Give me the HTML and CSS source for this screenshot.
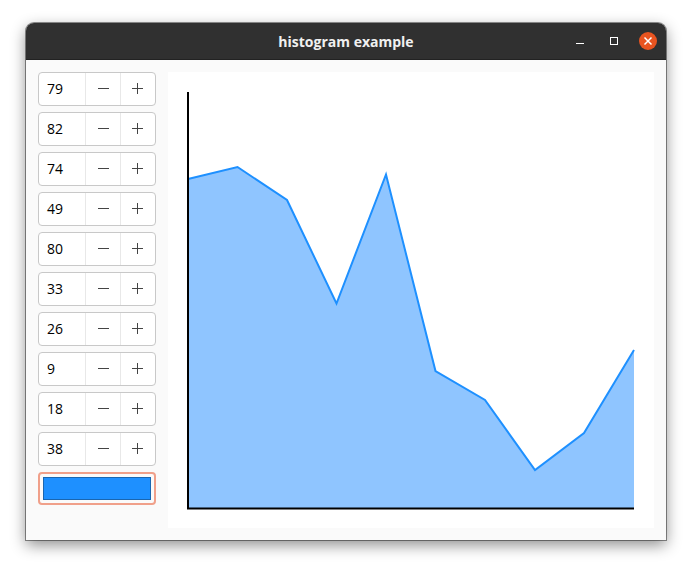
FILE: index.html
```html
<!DOCTYPE html>
<html lang="en">
<head>
<meta charset="utf-8">
<title>histogram example</title>
<link rel="stylesheet" href="styles.css">
</head>
<body>
<div class="window">
  <header class="titlebar">
    <span class="title">histogram example</span>
    <div class="controls">
      <svg class="ctl" width="10" height="10" viewBox="0 0 10 10"><rect x="1" y="7" width="8" height="1" fill="#fff"/></svg>
      <svg class="ctl ctl-max" width="10" height="10" viewBox="0 0 10 10"><rect x="1.5" y="1.5" width="7" height="7" fill="none" stroke="#fff"/></svg>
      <svg class="ctl-close" width="18" height="18" viewBox="0 0 18 18"><circle cx="9" cy="9" r="9" fill="#e95420"/><path d="M5.5 5.5l7 7M12.5 5.5l-7 7" stroke="#fff" stroke-width="1.5"/></svg>
    </div>
  </header>
  <main class="content">
    <div class="side">
      <div class="spin"><span class="val">79</span><span class="btn btn-minus"><svg width="11" height="11" viewBox="0 0 11 11"><path d="M0 5.5h11" stroke="#444"/></svg></span><span class="btn btn-plus"><svg width="11" height="11" viewBox="0 0 11 11"><path d="M0 5.5h11M5.5 0v11" stroke="#444"/></svg></span></div>
      <div class="spin"><span class="val">82</span><span class="btn btn-minus"><svg width="11" height="11" viewBox="0 0 11 11"><path d="M0 5.5h11" stroke="#444"/></svg></span><span class="btn btn-plus"><svg width="11" height="11" viewBox="0 0 11 11"><path d="M0 5.5h11M5.5 0v11" stroke="#444"/></svg></span></div>
      <div class="spin"><span class="val">74</span><span class="btn btn-minus"><svg width="11" height="11" viewBox="0 0 11 11"><path d="M0 5.5h11" stroke="#444"/></svg></span><span class="btn btn-plus"><svg width="11" height="11" viewBox="0 0 11 11"><path d="M0 5.5h11M5.5 0v11" stroke="#444"/></svg></span></div>
      <div class="spin"><span class="val">49</span><span class="btn btn-minus"><svg width="11" height="11" viewBox="0 0 11 11"><path d="M0 5.5h11" stroke="#444"/></svg></span><span class="btn btn-plus"><svg width="11" height="11" viewBox="0 0 11 11"><path d="M0 5.5h11M5.5 0v11" stroke="#444"/></svg></span></div>
      <div class="spin"><span class="val">80</span><span class="btn btn-minus"><svg width="11" height="11" viewBox="0 0 11 11"><path d="M0 5.5h11" stroke="#444"/></svg></span><span class="btn btn-plus"><svg width="11" height="11" viewBox="0 0 11 11"><path d="M0 5.5h11M5.5 0v11" stroke="#444"/></svg></span></div>
      <div class="spin"><span class="val">33</span><span class="btn btn-minus"><svg width="11" height="11" viewBox="0 0 11 11"><path d="M0 5.5h11" stroke="#444"/></svg></span><span class="btn btn-plus"><svg width="11" height="11" viewBox="0 0 11 11"><path d="M0 5.5h11M5.5 0v11" stroke="#444"/></svg></span></div>
      <div class="spin"><span class="val">26</span><span class="btn btn-minus"><svg width="11" height="11" viewBox="0 0 11 11"><path d="M0 5.5h11" stroke="#444"/></svg></span><span class="btn btn-plus"><svg width="11" height="11" viewBox="0 0 11 11"><path d="M0 5.5h11M5.5 0v11" stroke="#444"/></svg></span></div>
      <div class="spin"><span class="val">9</span><span class="btn btn-minus"><svg width="11" height="11" viewBox="0 0 11 11"><path d="M0 5.5h11" stroke="#444"/></svg></span><span class="btn btn-plus"><svg width="11" height="11" viewBox="0 0 11 11"><path d="M0 5.5h11M5.5 0v11" stroke="#444"/></svg></span></div>
      <div class="spin"><span class="val">18</span><span class="btn btn-minus"><svg width="11" height="11" viewBox="0 0 11 11"><path d="M0 5.5h11" stroke="#444"/></svg></span><span class="btn btn-plus"><svg width="11" height="11" viewBox="0 0 11 11"><path d="M0 5.5h11M5.5 0v11" stroke="#444"/></svg></span></div>
      <div class="spin"><span class="val">38</span><span class="btn btn-minus"><svg width="11" height="11" viewBox="0 0 11 11"><path d="M0 5.5h11" stroke="#444"/></svg></span><span class="btn btn-plus"><svg width="11" height="11" viewBox="0 0 11 11"><path d="M0 5.5h11M5.5 0v11" stroke="#444"/></svg></span></div>
      <div class="color-btn"><div class="swatch"></div></div>
    </div>
    <div class="canvas">
      <svg class="chart" width="486" height="456" viewBox="0 0 486 456">
        <polygon points="20,107 69.5,95 119,128 168.5,231.5 218,102.5 267.5,299 317,328 367,398 416,361 466,278 466,436 20,436" fill="#8fc5ff"/>
        <polyline points="20,107 69.5,95 119,128 168.5,231.5 218,102.5 267.5,299 317,328 367,398 416,361 466,278" fill="none" stroke="#1e90ff" stroke-width="2"/>
        <path d="M20 20V436.5H466" fill="none" stroke="#000" stroke-width="2"/>
      </svg>
    </div>
  </main>
</div>
</body>
</html>
```

FILE: styles.css
```css
html, body {
  margin: 0;
  height: 100%;
  background: #fff;
  overflow: hidden;
}
body {
  padding: 23px 26px 0;
  box-sizing: border-box;
  font-family: "Open Sans", "Noto Sans", sans-serif;
}
.window {
  width: 640px;
  height: 517px;
  box-sizing: border-box;
  display: flex;
  flex-direction: column;
  border-radius: 8px 8px 0 0;
  background: #fafafa;
  box-shadow: 0 0 0 1px rgba(0, 0, 0, 0.42), 0 5px 15px rgba(0, 0, 0, 0.45);
  overflow: hidden;
}
.titlebar {
  height: 37px;
  flex: none;
  background: #303030;
  border-bottom: 1px solid #222;
  box-sizing: border-box;
  display: flex;
  align-items: center;
  justify-content: center;
  position: relative;
}
.title {
  color: #f0f0f0;
  font-size: 14px;
  font-weight: 700;
}
.controls {
  position: absolute;
  right: 9px;
  top: 9px;
  display: flex;
  align-items: center;
  gap: 24px;
}
.ctl, .ctl-close {
  display: block;
}
.ctl-max {
  margin-right: -4px;
}
.content {
  flex: 1;
  display: flex;
  gap: 12px;
  padding: 12px;
  min-height: 0;
}
.side {
  width: 118px;
  flex: none;
  display: flex;
  flex-direction: column;
  gap: 6px;
}
.spin {
  height: 34px;
  box-sizing: border-box;
  display: flex;
  background: #fff;
  border: 1px solid #c8c8c8;
  border-radius: 4px;
}
.val {
  width: 46px;
  box-sizing: border-box;
  padding-left: 8px;
  font-size: 14px;
  line-height: 32px;
  color: #000;
}
.btn {
  width: 35px;
  box-sizing: border-box;
  border-left: 1px solid #e8e8e8;
  padding-top: 10px;
}
.btn svg {
  display: block;
}
.btn-minus {
  padding-left: 12px;
}
.btn-plus {
  padding-left: 11px;
}
.color-btn {
  height: 33px;
  box-sizing: border-box;
  border: 2px solid #f0a08a;
  border-radius: 4px;
  padding: 3px;
  background: #fafafa;
}
.swatch {
  height: 100%;
  box-sizing: border-box;
  background: #1e90ff;
  border: 1px solid #1a66b0;
}
.canvas {
  width: 486px;
  height: 456px;
  background: #fff;
}
.chart {
  display: block;
}
```
